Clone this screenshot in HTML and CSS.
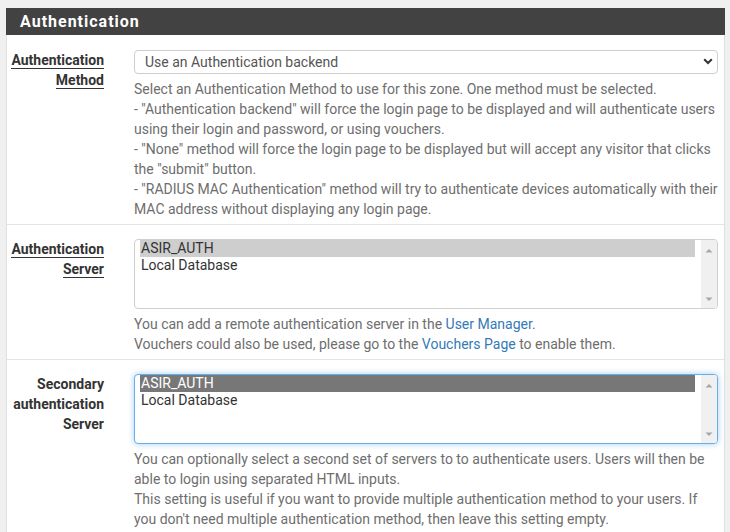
FILE: index.html
```html
<!DOCTYPE html>
<html lang="en">
<head>
<meta charset="utf-8">
<title>Authentication</title>
<link rel="stylesheet" href="styles.css">
</head>
<body>
<div class="panel">
  <div class="panel-heading"><h2 class="panel-title">Authentication</h2></div>
  <div class="panel-body">
    <div class="row">
      <div class="label"><span class="required">Authentication Method</span></div>
      <div class="control">
        <div class="select-wrap">
          <select class="select">
            <option>Use an Authentication backend</option>
          </select>
          <svg class="chevron" width="10" height="7" viewBox="0 0 10 7"><path d="M1.2 1.2 L5 5 L8.8 1.2" fill="none" stroke="#333" stroke-width="2"/></svg>
        </div>
        <div class="help">Select an Authentication Method to use for this zone. One method must be selected.<br>- "Authentication backend" will force the login page to be displayed and will authenticate users using their login and password, or using vouchers.<br>- "None" method will force the login page to be displayed but will accept any visitor that clicks the "submit" button.<br>- "RADIUS MAC Authentication" method will try to authenticate devices automatically with their MAC address without displaying any login page.</div>
      </div>
    </div>
    <div class="row">
      <div class="label"><span class="required">Authentication Server</span></div>
      <div class="control">
        <div class="listbox" role="listbox">
          <div class="options">
            <div class="option selected" role="option">ASIR_AUTH</div>
            <div class="option" role="option">Local Database</div>
          </div>
          <div class="scrollbar">
            <svg width="8" height="5" viewBox="0 0 8 5"><path d="M0.5 4.5 L4 1 L7.5 4.5 Z" fill="#a6a6a6"/></svg>
            <svg width="8" height="5" viewBox="0 0 8 5"><path d="M0.5 0.5 L4 4 L7.5 0.5 Z" fill="#a6a6a6"/></svg>
          </div>
        </div>
        <div class="help">You can add a remote authentication server in the <a href="#">User Manager</a>.<br>Vouchers could also be used, please go to the <a href="#">Vouchers Page</a> to enable them.</div>
      </div>
    </div>
    <div class="row">
      <div class="label">Secondary authentication Server</div>
      <div class="control">
        <div class="listbox focused" role="listbox">
          <div class="options">
            <div class="option active" role="option">ASIR_AUTH</div>
            <div class="option" role="option">Local Database</div>
          </div>
          <div class="scrollbar">
            <svg width="8" height="5" viewBox="0 0 8 5"><path d="M0.5 4.5 L4 1 L7.5 4.5 Z" fill="#a6a6a6"/></svg>
            <svg width="8" height="5" viewBox="0 0 8 5"><path d="M0.5 0.5 L4 4 L7.5 0.5 Z" fill="#a6a6a6"/></svg>
          </div>
        </div>
        <div class="help">You can optionally select a second set of servers to to authenticate users. Users will then be able to login using separated HTML inputs.<br>This setting is useful if you want to provide multiple authentication method to your users. If you don't need multiple authentication method, then leave this setting empty.</div>
      </div>
    </div>
  </div>
</div>
</body>
</html>
```

FILE: styles.css
```css
html, body {
  margin: 0;
  padding: 0;
}
body {
  background: #f0f0f0;
  font-family: Roboto, "Liberation Sans", sans-serif;
  font-size: 14px;
  color: #333;
  overflow: hidden;
}
.panel {
  margin: 8px 5px 0 6px;
  background: #fff;
  border: 1px solid #e0e0e0;
  border-top: 0;
}
.panel-heading {
  background: #424242;
  margin: 0 -1px;
  height: 27px;
  padding: 0 14px;
}
.panel-title {
  margin: 0;
  color: #fff;
  font-size: 16px;
  font-weight: 700;
  letter-spacing: 1px;
  line-height: 27px;
}
.panel-body {
  padding-top: 1px;
}
.row {
  display: grid;
  grid-template-columns: 97px 1fr;
  column-gap: 30px;
  padding: 14px 6px 5px 0;
  border-bottom: 1px solid #e4e4e4;
}
.label {
  text-align: right;
  font-weight: 700;
  line-height: 20px;
  color: #333;
}
.required {
  border-bottom: 1px solid #333;
}
.control {
  min-width: 0;
}
.select-wrap {
  position: relative;
  height: 24px;
}
.select {
  appearance: none;
  -webkit-appearance: none;
  display: block;
  width: 100%;
  height: 24px;
  margin: 0;
  padding: 0 10px;
  border: 1px solid #cfcfcf;
  border-radius: 4px;
  background: #fff;
  color: #555;
  font-family: Roboto, "Liberation Sans", sans-serif;
  font-size: 14px;
  outline: none;
}
.chevron {
  position: absolute;
  right: 5px;
  top: 8px;
  pointer-events: none;
}
.help {
  margin-top: 5px;
  line-height: 20px;
  color: #6e6e6e;
}
.help a {
  color: #337ab7;
  text-decoration: none;
}
.listbox {
  display: flex;
  height: 70px;
  box-sizing: border-box;
  border: 1px solid #cfcfcf;
  border-radius: 4px;
  background: #fff;
  overflow: hidden;
}
.listbox.focused {
  border-color: #66afe9;
  box-shadow: 0 0 6px rgba(102, 175, 233, 0.6);
}
.options {
  flex: 1;
  padding: 0 6px 0 5px;
}
.option {
  height: 17px;
  line-height: 17px;
  padding: 0 1px;
  color: #333;
  white-space: nowrap;
}
.option.selected {
  background: #cecece;
}
.option.active {
  background: #777;
  color: #fff;
}
.scrollbar {
  width: 16px;
  background: #f0f0f0;
  display: flex;
  flex-direction: column;
  justify-content: space-between;
  align-items: center;
  padding: 8px 0 6px;
}
.scrollbar svg {
  display: block;
}
```
